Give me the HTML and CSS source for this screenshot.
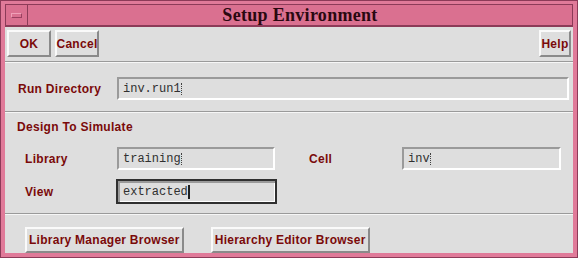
FILE: index.html
```html
<html>
<head>
    <link rel="stylesheet" href="styles.css">
</head>
<body>
    <div id="window">
        <div id="titlebar">
            <div id="menubox"><div id="menubar"></div></div>
            <div id="title">Setup Environment</div>
        </div>
        <div id="content">
            <div class="toolbar">
                <div class="button ok">OK</div>
                <div class="button cancel">Cancel</div>
                <div class="spacer"></div>
                <div class="button help">Help</div>
            </div>
            <div class="sep"></div>
            <div class="row rundir">
                <div class="label rd">Run Directory</div>
                <div class="field wide">inv.run1<span class="caret"></span></div>
            </div>
            <div class="sep"></div>
            <div class="section">Design To Simulate</div>
            <div class="grid">
                <div class="label">Library</div>
                <div class="field short">training<span class="caret"></span></div>
                <div class="label cell">Cell</div>
                <div class="field short">inv<span class="caret"></span></div>
                <div class="label">View</div>
                <div class="field short focus">extracted<span class="caret big"></span></div>
            </div>
            <div class="sep"></div>
            <div class="bottom">
                <div class="button">Library Manager Browser</div>
                <div class="button">Hierarchy Editor Browser</div>
            </div>
        </div>
    </div>
</body>
</html>
```

FILE: styles.css
```css
* {
    margin: 0;
    padding: 0;
    box-sizing: border-box;
}

body {
    background-color: #d86f8e;
}

div#window {
    width: 578px;
    height: 258px;
    background-color: #e07a99;
    border: 1px solid #8c3b58;
    padding: 3px 4px 4px 4px;
    display: flex;
    flex-direction: column;
}

div#titlebar {
    height: 23px;
    display: flex;
    flex-direction: row;
    background-color: #da7090;
    border: 1px solid #8c3b58;
    border-bottom: 2px solid #8c3b58;
}

div#menubox {
    width: 22px;
    border-right: 1px solid #8c3b58;
    display: flex;
    justify-content: center;
    align-items: center;
}

div#menubar {
    width: 11px;
    height: 5px;
    border: 1px solid #9a4060;
    border-top-color: #f0a0b8;
    border-left-color: #f0a0b8;
}

div#title {
    flex: 1;
    text-align: center;
    font-family: "Liberation Serif", serif;
    font-weight: bold;
    font-size: 18px;
    letter-spacing: 0.3px;
    line-height: 20px;
    color: #2a0810;
}

div#content {
    flex: 1;
    background-color: #dedede;
    display: flex;
    flex-direction: column;
    font-family: "Liberation Sans", sans-serif;
    font-weight: bold;
    font-size: 12px;
    letter-spacing: 0.3px;
    color: #7a0a0a;
}

div.toolbar {
    display: flex;
    flex-direction: row;
    gap: 4px;
    padding: 3px 2px 4px 2px;
}

div.spacer {
    flex: 1;
}

div.button {
    height: 27px;
    display: flex;
    align-items: center;
    justify-content: center;
    padding: 0 5px;
    border: 2px solid;
    border-color: #fafafa #8a8a8a #8a8a8a #fafafa;
    background-color: #dedede;
}

div.ok {
    width: 44px;
}

div.cancel {
    width: 44px;
    padding: 0 2px;
}

div.help {
    width: 32px;
    padding: 0 2px;
}

div.sep {
    height: 2px;
    border-top: 1px solid #9a9a9a;
    border-bottom: 1px solid #f6f6f6;
}

div.row {
    display: flex;
    flex-direction: row;
    align-items: center;
}

div.rundir {
    padding: 14px 4px 11px 13px;
}

div.label.rd {
    width: 99px;
}

div.field {
    height: 23px;
    border: 2px solid;
    border-color: #9a9a9a #ffffff #ffffff #9a9a9a;
    font-family: "Liberation Mono", monospace;
    font-weight: normal;
    font-size: 12px;
    letter-spacing: 0;
    color: #303030;
    padding: 0 4px;
    display: flex;
    align-items: center;
    white-space: pre;
}

div.wide {
    flex: 1;
}

span.caret {
    display: inline-block;
    width: 1px;
    height: 12px;
    border-left: 1px dotted #404040;
}

span.caret.big {
    border-left: 2px solid #202020;
    height: 14px;
}

div.section {
    padding: 7px 0 0 12px;
    height: 27px;
}

div.grid {
    display: grid;
    grid-template-columns: 92px 158px 34px 93px 159px;
    grid-row-gap: 9px;
    padding: 7px 0 9px 20px;
    align-items: center;
}

div.grid > div.label {
    grid-column: 1;
}

div.grid > div.label.cell {
    grid-column: 4;
}

div.grid > div.field.focus {
    grid-column: 2;
    height: 25px;
    border: 2px solid #303030;
    box-shadow: inset 2px 2px 0 #9a9a9a, inset -1px -1px 0 #ffffff;
    padding-left: 5px;
    margin-left: -1px;
    margin-right: -2px;
}

div.bottom {
    display: flex;
    flex-direction: row;
    gap: 27px;
    padding: 12px 0 0 20px;
}

div.bottom > div.button {
    height: 26px;
    padding: 0 2px;
    letter-spacing: 0.26px;
}
```
